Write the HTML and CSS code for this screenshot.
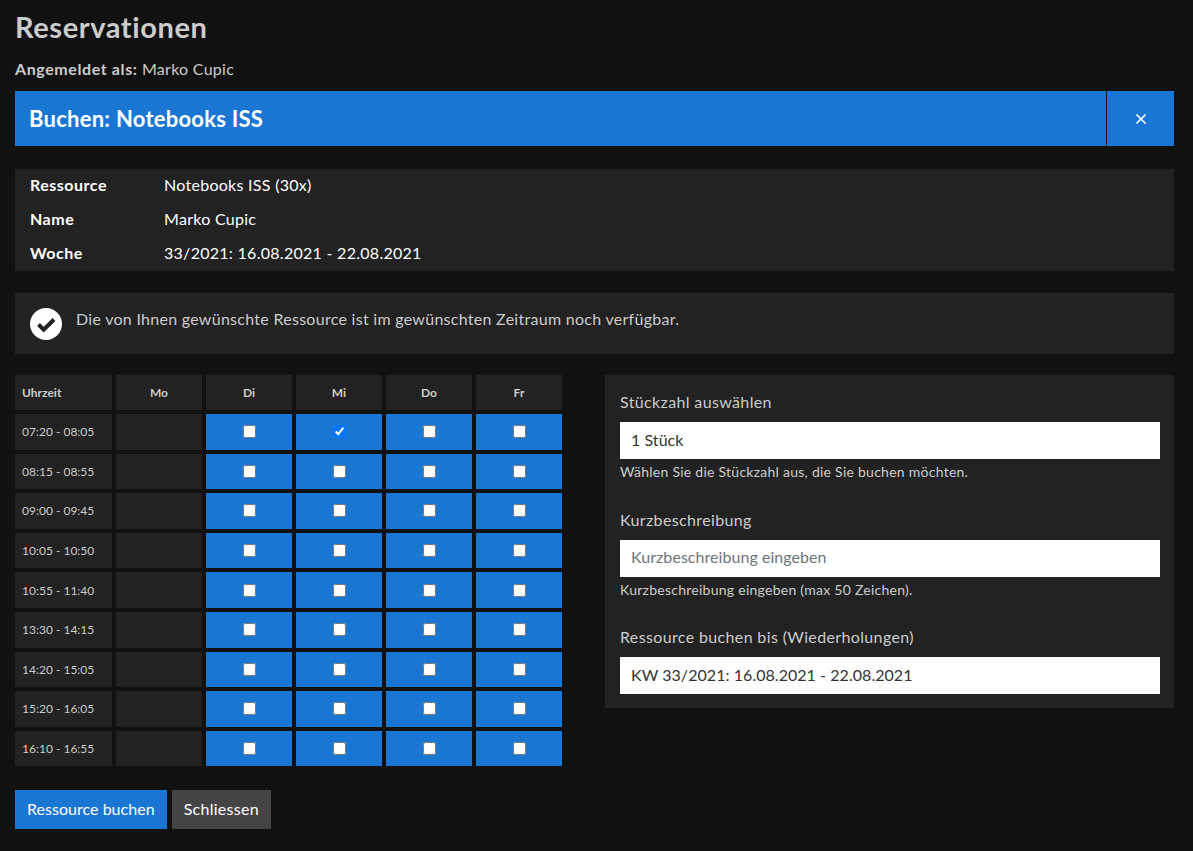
FILE: index.html
```html
<!DOCTYPE html>
<html lang="de">
<head>
    <meta charset="UTF-8">
    <title>Reservationen</title>
    <link rel="stylesheet" href="styles.css">
</head>
<body>
    <h1 class="page-title">Reservationen</h1>
    <p class="logged-in"><strong>Angemeldet als:</strong> Marko Cupic</p>

    <div class="panel-head">
        <h2 class="panel-title">Buchen: Notebooks ISS</h2>
        <button class="panel-close" type="button" aria-label="Schliessen">
            <svg width="12" height="12" viewBox="0 0 12 12"><path d="M1.5 1.5l9 9M10.5 1.5l-9 9" stroke="#fff" stroke-width="1.7" fill="none"/></svg>
        </button>
    </div>

    <table class="info-table">
        <tr><th>Ressource</th><td>Notebooks ISS (30x)</td></tr>
        <tr><th>Name</th><td>Marko Cupic</td></tr>
        <tr><th>Woche</th><td>33/2021: 16.08.2021 - 22.08.2021</td></tr>
    </table>

    <div class="alert">
        <svg class="alert-icon" width="32" height="32" viewBox="0 0 32 32">
            <circle cx="16" cy="16" r="16" fill="#fff"/>
            <path d="M8.5 16.5l5.2 5.2L24 11.5" stroke="#222" stroke-width="4" fill="none"/>
        </svg>
        <span>Die von Ihnen gewünschte Ressource ist im gewünschten Zeitraum noch verfügbar.</span>
    </div>

    <div class="booking">
        <div class="slots" id="slots">
            <div class="slot-head slot-time">Uhrzeit</div>
            <div class="slot-head">Mo</div>
            <div class="slot-head">Di</div>
            <div class="slot-head">Mi</div>
            <div class="slot-head">Do</div>
            <div class="slot-head">Fr</div>

            <div class="slot-time">07:20 - 08:05</div><div class="slot-off"></div>
            <label class="slot"><input type="checkbox"></label><label class="slot"><input type="checkbox" checked></label><label class="slot"><input type="checkbox"></label><label class="slot"><input type="checkbox"></label>

            <div class="slot-time">08:15 - 08:55</div><div class="slot-off"></div>
            <label class="slot"><input type="checkbox"></label><label class="slot"><input type="checkbox"></label><label class="slot"><input type="checkbox"></label><label class="slot"><input type="checkbox"></label>

            <div class="slot-time">09:00 - 09:45</div><div class="slot-off"></div>
            <label class="slot"><input type="checkbox"></label><label class="slot"><input type="checkbox"></label><label class="slot"><input type="checkbox"></label><label class="slot"><input type="checkbox"></label>

            <div class="slot-time">10:05 - 10:50</div><div class="slot-off"></div>
            <label class="slot"><input type="checkbox"></label><label class="slot"><input type="checkbox"></label><label class="slot"><input type="checkbox"></label><label class="slot"><input type="checkbox"></label>

            <div class="slot-time">10:55 - 11:40</div><div class="slot-off"></div>
            <label class="slot"><input type="checkbox"></label><label class="slot"><input type="checkbox"></label><label class="slot"><input type="checkbox"></label><label class="slot"><input type="checkbox"></label>

            <div class="slot-time">13:30 - 14:15</div><div class="slot-off"></div>
            <label class="slot"><input type="checkbox"></label><label class="slot"><input type="checkbox"></label><label class="slot"><input type="checkbox"></label><label class="slot"><input type="checkbox"></label>

            <div class="slot-time">14:20 - 15:05</div><div class="slot-off"></div>
            <label class="slot"><input type="checkbox"></label><label class="slot"><input type="checkbox"></label><label class="slot"><input type="checkbox"></label><label class="slot"><input type="checkbox"></label>

            <div class="slot-time">15:20 - 16:05</div><div class="slot-off"></div>
            <label class="slot"><input type="checkbox"></label><label class="slot"><input type="checkbox"></label><label class="slot"><input type="checkbox"></label><label class="slot"><input type="checkbox"></label>

            <div class="slot-time">16:10 - 16:55</div><div class="slot-off"></div>
            <label class="slot"><input type="checkbox"></label><label class="slot"><input type="checkbox"></label><label class="slot"><input type="checkbox"></label><label class="slot"><input type="checkbox"></label>
        </div>

        <form class="booking-form">
            <div class="field">
                <label class="field-label" for="amount">Stückzahl auswählen</label>
                <select class="field-input" id="amount"><option>1 Stück</option></select>
                <small class="field-help">Wählen Sie die Stückzahl aus, die Sie buchen möchten.</small>
            </div>
            <div class="field">
                <label class="field-label" for="desc">Kurzbeschreibung</label>
                <input class="field-input" id="desc" type="text" placeholder="Kurzbeschreibung eingeben">
                <small class="field-help">Kurzbeschreibung eingeben (max 50 Zeichen).</small>
            </div>
            <div class="field">
                <label class="field-label" for="until">Ressource buchen bis (Wiederholungen)</label>
                <select class="field-input" id="until"><option>KW 33/2021: 16.08.2021 - 22.08.2021</option></select>
            </div>
        </form>
    </div>

    <div class="actions">
        <button class="btn btn-primary" type="button">Ressource buchen</button>
        <button class="btn btn-secondary" type="button">Schliessen</button>
    </div>
</body>
</html>
```

FILE: styles.css
```css
* {
    box-sizing: border-box;
}
body {
    font-family: "Lato", "Noto Sans", sans-serif;
    font-size: 16px;
    letter-spacing: 0.28px;
    background-color: #111;
    color: #ccc;
    margin: 0;
    padding: 13px 19px 22px 15px;
}
.page-title {
    font-size: 29px;
    line-height: 28px;
    font-weight: 700;
    letter-spacing: 0.6px;
    color: #ccc;
    margin: 0 0 18px;
}
.logged-in {
    line-height: 20px;
    margin: 0 0 12px;
}
.logged-in strong {
    letter-spacing: 0.6px;
}
.panel-head {
    display: flex;
    height: 55px;
    background-color: #1976d2;
    color: #fff;
}
.panel-title {
    flex: 1;
    margin: 0;
    padding: 0 14px;
    font-size: 22px;
    line-height: 55px;
    font-weight: 700;
    letter-spacing: 0.25px;
}
.panel-close {
    width: 68px;
    border: none;
    border-left: 1px solid #111;
    background: none;
    padding: 0;
    display: flex;
    justify-content: center;
    align-items: center;
}
.info-table {
    width: 100%;
    margin-top: 23px;
    background-color: #222;
    border-collapse: collapse;
    color: #fff;
}
.info-table th,
.info-table td {
    height: 34px;
    padding: 0 0 4px;
    text-align: left;
}
.info-table th {
    width: 149px;
    padding-left: 15px;
    font-weight: 700;
    letter-spacing: 0.5px;
}
.alert {
    display: flex;
    align-items: center;
    gap: 14px;
    height: 61px;
    margin-top: 22px;
    padding: 0 15px;
    background-color: #222;
}
.alert span {
    margin-top: -10px;
}
.booking {
    display: flex;
    align-items: flex-start;
    gap: 43px;
    margin-top: 21px;
}
.slots {
    display: grid;
    grid-template-columns: 97px repeat(5, 86px);
    grid-template-rows: 35px;
    grid-auto-rows: 35.6px;
    gap: 4px;
    flex: none;
    font-size: 12px;
    letter-spacing: 0;
}
.slots > div {
    background-color: #222;
    display: flex;
    align-items: center;
}
.slot-head {
    justify-content: center;
    font-weight: 700;
}
.slots .slot-time {
    justify-content: flex-start;
    padding-left: 7px;
}
.slot {
    background-color: #1976d2;
    display: flex;
    justify-content: center;
    align-items: center;
}
.slot input {
    margin: 0;
}
.booking-form {
    flex: 1;
    height: 333px;
    padding: 15px 14px 15px 15px;
    background-color: #222;
    letter-spacing: 0.36px;
}
.field {
    margin-bottom: 26.5px;
}
.field-label {
    display: block;
    line-height: 23px;
    margin-bottom: 9px;
}
.field-input {
    display: block;
    width: 100%;
    height: 37px;
    padding: 0 11px 3px;
    border: none;
    border-radius: 0;
    background-color: #fff;
    color: #333;
    font: inherit;
    letter-spacing: 0.05px;
    appearance: none;
}
.field-input::placeholder {
    color: #6c757d;
}
.field-help {
    display: block;
    margin-top: 4px;
    font-size: 14px;
    line-height: 18px;
    letter-spacing: 0.26px;
}
.actions {
    display: flex;
    gap: 5px;
    margin-top: 24px;
}
.btn {
    height: 39px;
    padding: 0 12px 3px;
    border: none;
    color: #fff;
    font: inherit;
    letter-spacing: 0.28px;
}
.btn-primary {
    background-color: #1976d2;
    letter-spacing: 0.03px;
}
.btn-secondary {
    background-color: #444;
}
```
